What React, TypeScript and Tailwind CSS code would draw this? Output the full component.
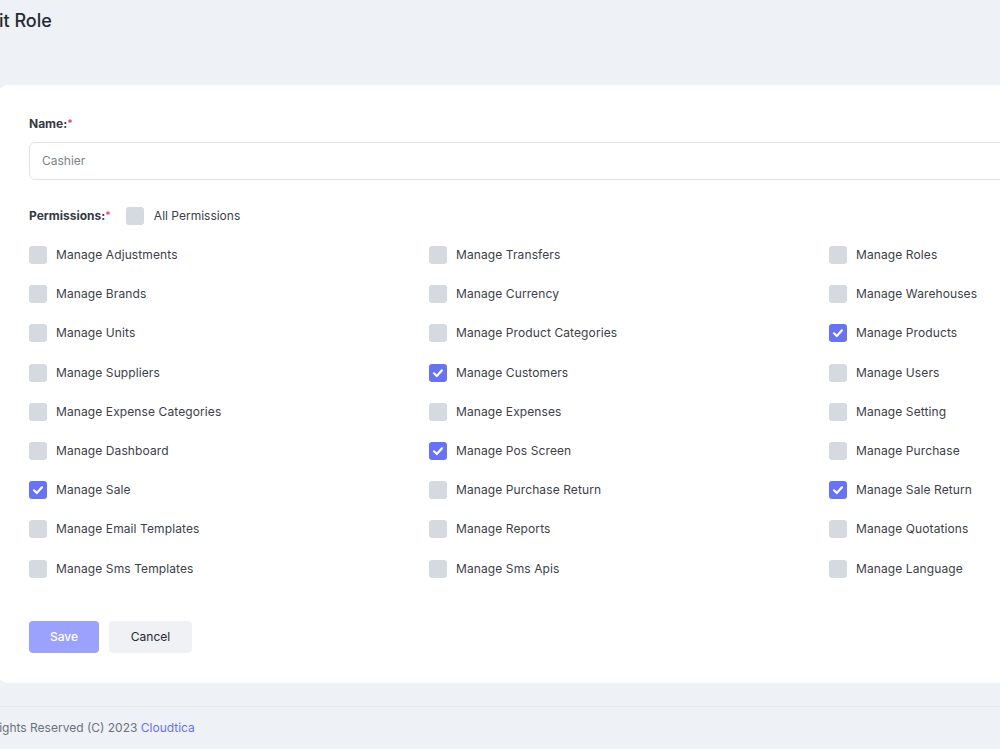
import React from "react";

const cols: [string, boolean][][] = [
  [
    ["Manage Adjustments", false],
    ["Manage Brands", false],
    ["Manage Units", false],
    ["Manage Suppliers", false],
    ["Manage Expense Categories", false],
    ["Manage Dashboard", false],
    ["Manage Sale", true],
    ["Manage Email Templates", false],
    ["Manage Sms Templates", false],
  ],
  [
    ["Manage Transfers", false],
    ["Manage Currency", false],
    ["Manage Product Categories", false],
    ["Manage Customers", true],
    ["Manage Expenses", false],
    ["Manage Pos Screen", true],
    ["Manage Purchase Return", false],
    ["Manage Reports", false],
    ["Manage Sms Apis", false],
  ],
  [
    ["Manage Roles", false],
    ["Manage Warehouses", false],
    ["Manage Products", true],
    ["Manage Users", false],
    ["Manage Setting", false],
    ["Manage Purchase", false],
    ["Manage Sale Return", true],
    ["Manage Quotations", false],
    ["Manage Language", false],
  ],
];

function Box({ checked }: { checked: boolean }) {
  return checked ? (
    <span className="w-[18px] h-[18px] rounded-[3px] bg-[#6772f5] flex items-center justify-center shrink-0">
      <svg width="14" height="14" viewBox="0 0 14 14" fill="none">
        <path d="M3 7.3 L5.8 10 L11 4.3" stroke="white" strokeWidth="2.2" strokeLinecap="round" strokeLinejoin="round" />
      </svg>
    </span>
  ) : (
    <span className="block w-[18px] h-[18px] rounded-[3px] bg-[#d5d9e0] shrink-0" />
  );
}

export default function App() {
  const rows = cols[0].map((_, r) => cols.map((c) => c[r]));
  return (
    <div
      className="w-[1000px] h-[749px] bg-[#eef1f6] overflow-hidden flex flex-col"
      style={{ fontFamily: "Inter, 'Noto Sans', sans-serif" }}
    >
      <div className="h-[40px] flex items-center ml-[-23px] text-[18px] font-medium text-[#262b33]">
        Edit Role
      </div>
      <div className="mt-[45px] ml-[-2px] w-[1260px] h-[598px] shrink-0 bg-white rounded-[10px] pl-[31px] pt-[29px] flex flex-col">
        <div className="h-[20px] flex items-center text-[12px] font-bold text-[#353a44]">
          Name:<span className="text-[#f1416c] text-[10px] self-start mt-[2px]">*</span>
        </div>
        <div className="mt-[8px] h-[38px] border border-[#dfe2e8] rounded-[6px] flex items-center pl-[12px] text-[12px] text-[#7c828c]">
          Cashier
        </div>
        <div className="mt-[26px] h-[20px] flex items-center">
          <span className="text-[12px] font-bold text-[#353a44] flex items-center">
            Permissions:<span className="text-[#f1416c] text-[10px] self-start mt-[1px]">*</span>
          </span>
          <span className="ml-[15px]"><Box checked={false} /></span>
          <span className="ml-[10px] text-[12px] text-[#3b4049]">All Permissions</span>
        </div>
        <div className="mt-[20px] flex flex-col">
          {rows.map((row, i) => (
            <div key={i} className="h-[39.2px] flex">
              {row.map(([label, checked]) => (
                <div key={label} className="w-[400px] shrink-0 flex items-start gap-[9px]">
                  <Box checked={checked} />
                  <span className="text-[12px] leading-[18px] tracking-[0.1px] text-[#3b4049]">{label}</span>
                </div>
              ))}
            </div>
          ))}
        </div>
        <div className="mt-[22px] flex gap-[10px]">
          <button className="w-[70px] h-[32px] rounded-[4px] bg-[#9aa2fd] text-white text-[12px] font-medium">
            Save
          </button>
          <button className="w-[83px] h-[32px] rounded-[4px] bg-[#eff1f5] text-[#262b33] text-[12px]">
            Cancel
          </button>
        </div>
      </div>
      <div className="mt-[23px] border-t border-[#e3e6ec] h-[43px] flex items-center ml-[-26px] text-[12px] text-[#6c727c]">
        All Rights Reserved (C) 2023&nbsp;<span className="text-[#6772f5]">Cloudtica</span>
      </div>
    </div>
  );
}
